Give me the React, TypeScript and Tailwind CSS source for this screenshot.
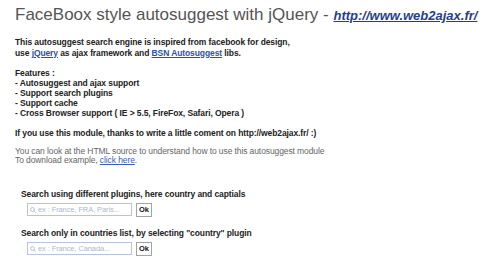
import React from "react"

function SearchBox({ placeholder }: { placeholder: string }) {
  return (
    <div className="flex items-center gap-[4px]">
      <div className="flex h-[13px] w-[105px] items-center gap-[2px] border border-[#b9c4dc] bg-white pl-[2px]">
        <svg
          aria-hidden="true"
          className="h-[6px] w-[6px] shrink-0"
          viewBox="0 0 6 6"
          fill="none"
          stroke="#b3bdd3"
          strokeWidth="1"
        >
          <circle cx="2.5" cy="2.5" r="1.9" />
          <path d="M3.9 3.9 5.6 5.6" />
        </svg>
        <input
          className="w-full min-w-0 bg-transparent text-[7.5px] leading-none text-[#475466] outline-none placeholder:text-[#aeb8cc]"
          placeholder={placeholder}
          type="text"
        />
      </div>
      <button
        className="flex h-[14px] w-[16px] items-center justify-center border border-[#a3a3a3] bg-white text-[7.5px] font-bold leading-none text-[#111]"
        type="button"
      >
        Ok
      </button>
    </div>
  )
}

export default function App() {
  return (
    <div className="min-h-[272px] w-[500px] bg-white pl-[15px] pt-[6px] font-['Liberation_Sans',Arial,sans-serif]">
      <h1 className="text-[17px] font-normal leading-[17px] text-[#555]">
        FaceBoox style autosuggest with jQuery -{" "}
        <a
          className="text-[13px] font-bold italic text-[#1f3f8f] underline"
          href="#"
        >
          http://www.web2ajax.fr/
        </a>
      </h1>

      <div className="mt-[13px] text-[8.5px] tracking-[-0.1px] text-[#222]">
        <p className="font-bold leading-[10.5px]">
          This autosuggest search engine is inspired from facebook for design,
          <br />
          use{" "}
          <a className="text-[#2a52a8] underline" href="#">
            jQuery
          </a>{" "}
          as ajax framework and{" "}
          <a className="text-[#2a52a8] underline" href="#">
            BSN Autosuggest
          </a>{" "}
          libs.
        </p>

        <div className="mt-[10px] font-bold leading-[10px]">
          <p>Features :</p>
          <p>- Autosuggest and ajax support</p>
          <p>- Support search plugins</p>
          <p>- Support cache</p>
          <p>- Cross Browser support ( IE &gt; 5.5, FireFox, Safari, Opera )</p>
        </div>

        <p className="mt-[9.5px] font-bold leading-[10px]">
          If you use this module, thanks to write a little coment on
          http://web2ajax.fr/ :)
        </p>

        <p className="mt-[9px] leading-[9.5px] text-[#666]">
          You can look at the HTML source to understand how to use this
          autosuggest module
          <br />
          To download example,{" "}
          <a className="text-[#3a5cb0] underline" href="#">
            click here
          </a>
          .
        </p>
      </div>

      <div className="mt-[23.5px] pl-[6px] text-[8.5px] tracking-[-0.1px] text-[#222]">
        <p className="font-bold leading-[10px]">
          Search using different plugins, here country and captials
        </p>
        <div className="mt-[3.5px] pl-[6px]">
          <SearchBox placeholder="ex : France, FRA, Paris..." />
        </div>

        <p className="mt-[11.5px] font-bold leading-[10px]">
          Search only in countries list, by selecting "country" plugin
        </p>
        <div className="mt-[3.5px] pl-[6px]">
          <SearchBox placeholder="ex : France, Canada..." />
        </div>
      </div>
    </div>
  )
}
